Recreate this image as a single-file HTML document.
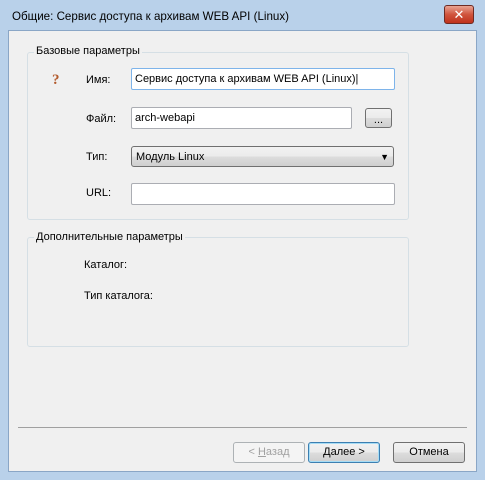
<!DOCTYPE html>
<html><head><meta charset="utf-8"><style>
*{box-sizing:border-box;margin:0;padding:0}
body{width:485px;height:480px;overflow:hidden;background:#b9d1ea;font-family:"Liberation Sans","DejaVu Sans",sans-serif;font-size:11px;color:#000;position:relative}
.a{position:absolute}
.client{left:8px;top:30px;width:469px;height:442px;background:#f0f0f0;border:1px solid #8aa6c6}
.grp{border:1px solid #d5dfe5;border-radius:3px}
.lg{background:#f0f0f0;padding:0 2px}
.ed{background:#fff;border:1px solid #abadb3;border-radius:2px;padding:4px 0 0 3px;height:22px}
.btn{border:1px solid #707070;border-radius:3px;background:linear-gradient(#f2f2f2,#ebebeb 50%,#dddddd 50%,#cfcfcf);text-align:center;line-height:19px}
</style></head><body>
<div class="a" style="left:12px;top:10px;font-size:11.6px">Общие: Сервис доступа к архивам WEB API (Linux)</div>
<div class="a" style="left:444px;top:5px;width:30px;height:19px;border:1px solid #6d2b24;border-radius:3px;background:linear-gradient(#e8a493,#d0543d 50%,#c0321c);color:#fff;font-weight:bold;text-align:center;line-height:17px;font-size:13px">✕</div>
<div class="a client"></div>
<div class="a grp" style="left:27px;top:52px;width:382px;height:168px"></div>
<div class="a lg" style="left:34px;top:45px;font-size:11px">Базовые параметры</div>
<div class="a" style="left:52px;top:72px;color:#b25a2c;font-size:15px;font-weight:bold;font-family:'Liberation Serif',serif">?</div>
<div class="a" style="left:86px;top:74px">Имя:</div>
<div class="a ed" style="left:131px;top:68px;width:264px;border-color:#7eb4ea">Сервис доступа к архивам WEB API (Linux)|</div>
<div class="a" style="left:86px;top:113px">Файл:</div>
<div class="a ed" style="left:131px;top:107px;width:221px">arch-webapi</div>
<div class="a btn" style="left:365px;top:108px;width:27px;height:20px;line-height:22px">...</div>
<div class="a" style="left:86px;top:151px">Тип:</div>
<div class="a btn" style="left:131px;top:146px;width:263px;height:21px;text-align:left;padding-left:4px;line-height:20px">Модуль Linux<span style="position:absolute;right:4px;top:0;font-size:9px">▼</span></div>
<div class="a" style="left:86px;top:187px">URL:</div>
<div class="a ed" style="left:131px;top:183px;width:264px"></div>
<div class="a grp" style="left:27px;top:237px;width:382px;height:110px"></div>
<div class="a lg" style="left:34px;top:231px">Дополнительные параметры</div>
<div class="a" style="left:84px;top:259px">Каталог:</div>
<div class="a" style="left:84px;top:290px">Тип каталога:</div>
<div class="a" style="left:18px;top:427px;width:449px;height:1px;background:#a0a0a0"></div>
<div class="a btn" style="left:233px;top:442px;width:72px;height:21px;color:#a0a0a0;border-color:#adb2b5;background:#f4f4f4">&lt; <u>Н</u>азад</div>
<div class="a btn" style="left:308px;top:442px;width:72px;height:21px;border-color:#3c7fb1;box-shadow:inset 0 0 0 1px #a6dcf5"><u>Д</u>алее &gt;</div>
<div class="a btn" style="left:393px;top:442px;width:72px;height:21px">Отмена</div>
</body></html>
